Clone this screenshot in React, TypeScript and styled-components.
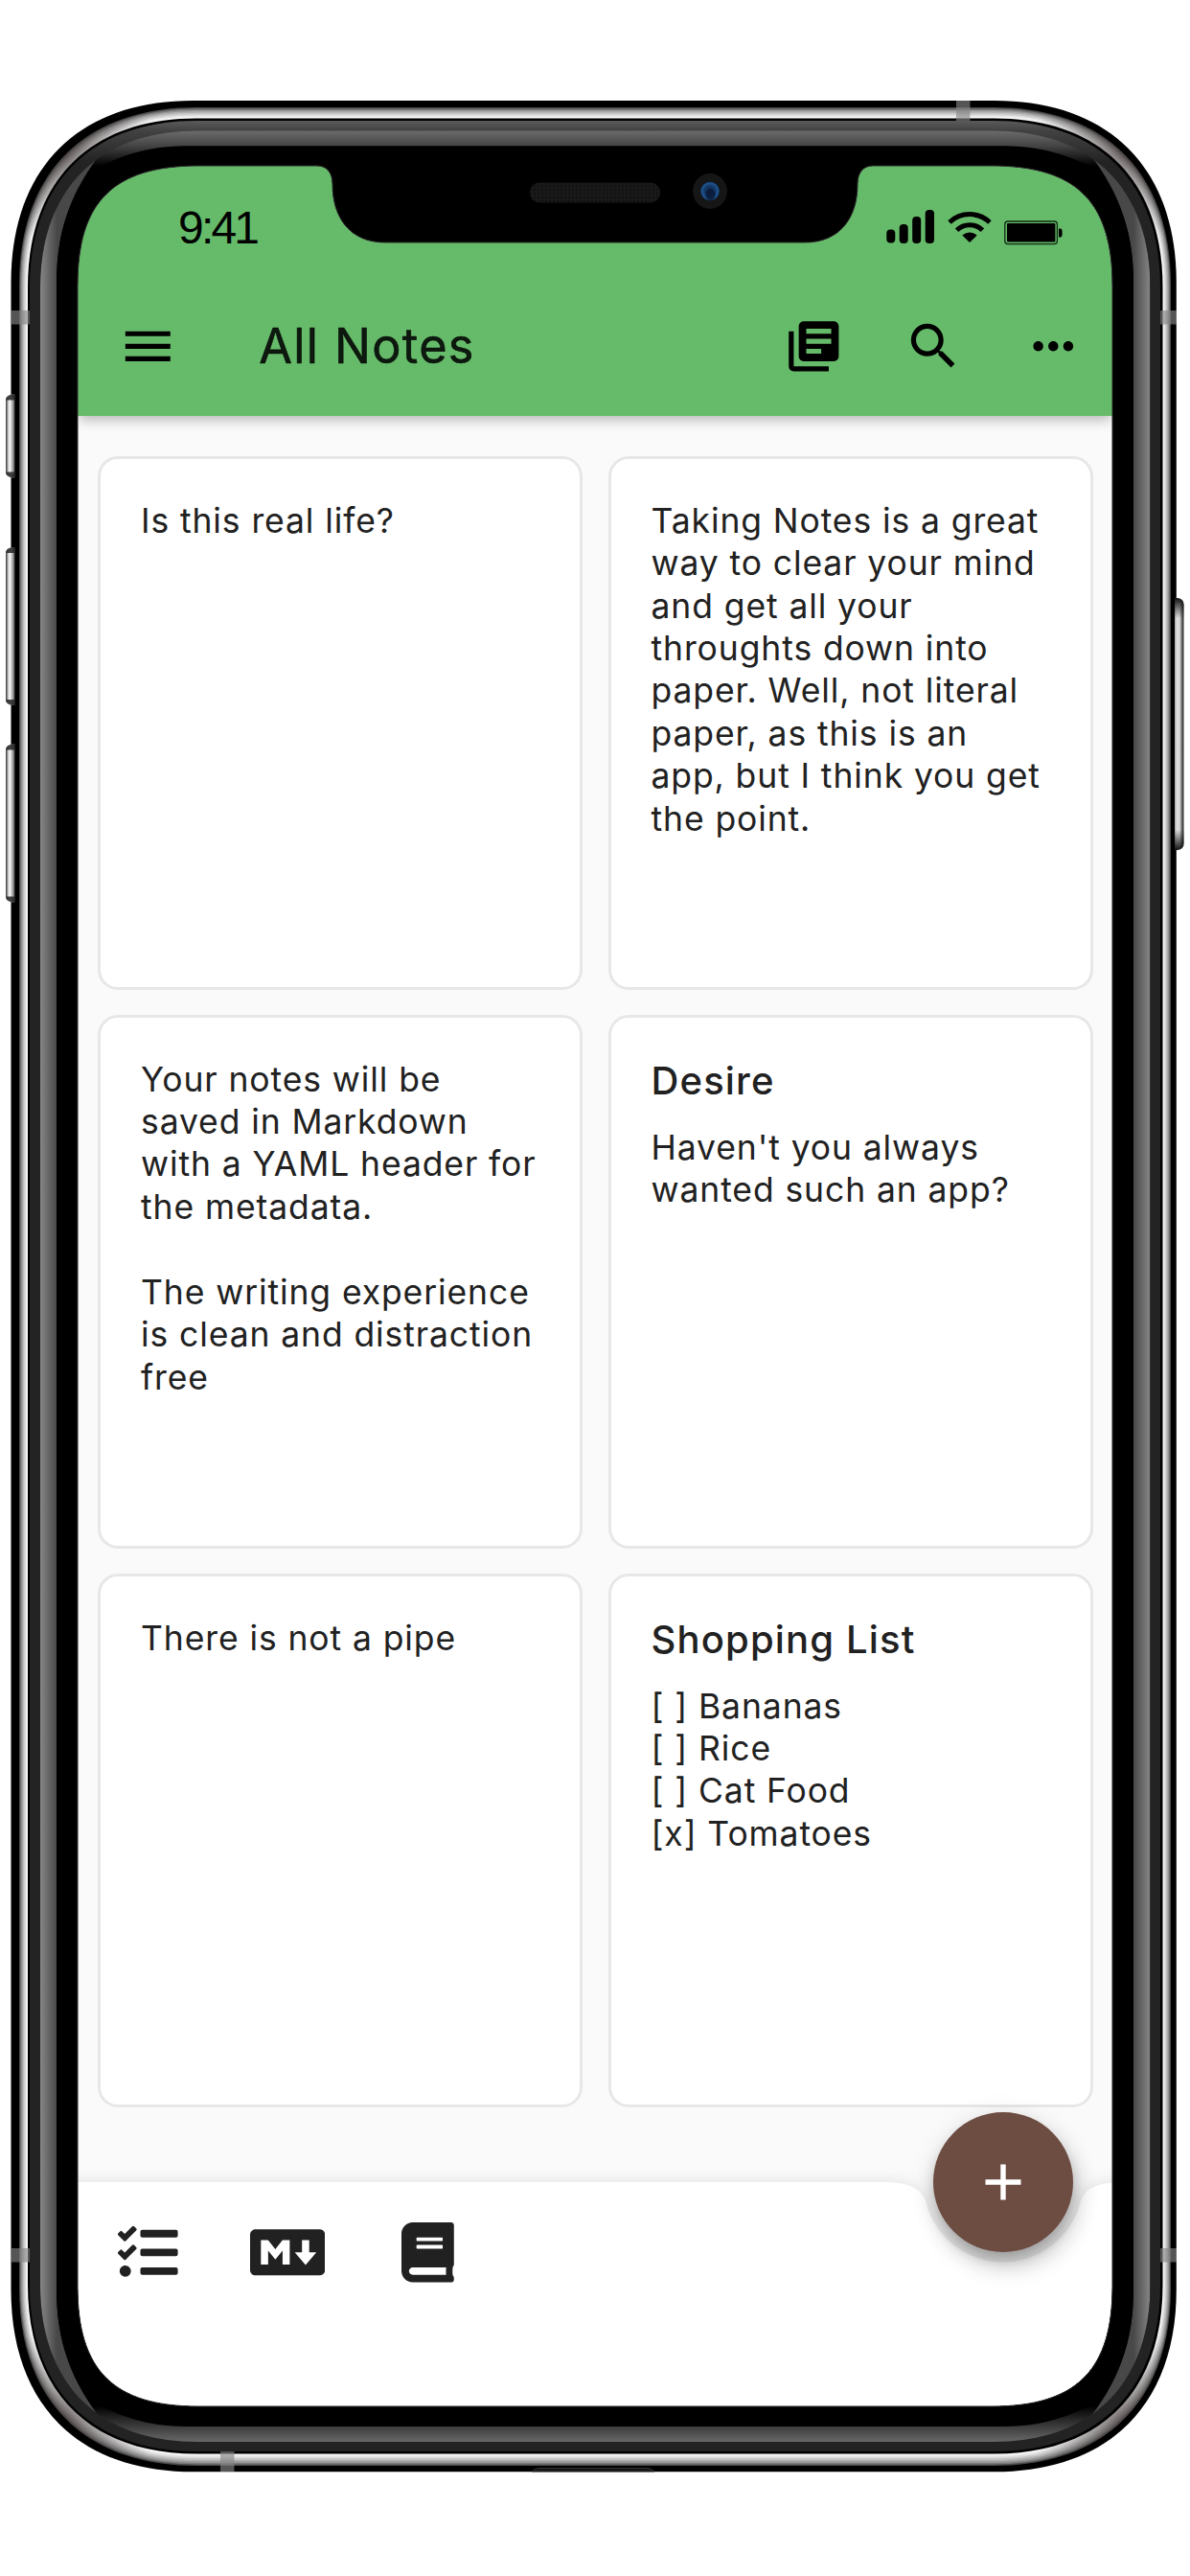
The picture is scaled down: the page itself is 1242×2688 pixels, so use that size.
import React from "react";
import styled, { createGlobalStyle } from "styled-components";
import { MdMenu, MdLibraryBooks, MdSearch, MdMoreHoriz } from "react-icons/md";
import { FaTasks, FaMarkdown, FaBook } from "react-icons/fa";

const GlobalStyle = createGlobalStyle`
  *, *::before, *::after { box-sizing: border-box; }
  body { margin: 0; background: #fff; }
  button { border: 0; background: none; padding: 0; margin: 0; color: inherit; font: inherit; }
  svg { display: block; flex: none; }
`;

const Page = styled.div`
  position: relative;
  width: 1242px;
  height: 2688px;
  padding: 173px 81px 177px;
  overflow: hidden;
  background: #fff;
  font-family: Inter, Roboto, "Liberation Sans", sans-serif;
`;

const Screen = styled.main`
  position: relative;
  display: flex;
  flex-direction: column;
  width: 1080px;
  height: 2338px;
  overflow: hidden;
  background: #fafafa;
  border-radius: 80px;
`;

const Header = styled.header`
  position: relative;
  flex: none;
  height: 261px;
  color: #000;
  background: #66bb6a;
  box-shadow: 0 5px 10px -3px rgba(0, 0, 0, 0.16), 0 8px 12px rgba(0, 0, 0, 0.08), 0 3px 16px rgba(0, 0, 0, 0.06);
`;

const StatusBar = styled.div`
  display: flex;
  justify-content: space-between;
  align-items: flex-start;
  height: 115px;
  padding: 38px 51px 0 105px;
`;

const StatusSymbols = styled.div`
  padding-top: 7px;
`;

const Clock = styled.time`
  font-family: "Liberation Sans", Arial, sans-serif;
  font-size: 48px;
  line-height: 54px;
  letter-spacing: -2.8px;
`;

const Toolbar = styled.div`
  display: flex;
  align-items: center;
  height: 146px;
  padding: 0 30.4px 0 41.7px;
`;

const Title = styled.h1`
  flex: 1;
  margin: 0 0 0 84.9px;
  font-size: 50.4px;
  font-weight: 400;
  line-height: 60px;
  letter-spacing: 1.35px;
  color: rgba(0, 0, 0, 0.87);
  -webkit-text-stroke: 0.6px rgba(0, 0, 0, 0.87);
`;

const Actions = styled.div`
  display: flex;
  gap: 62.6px;
`;

const IconButton = styled.button<{ $glyphWidth?: number }>`
  display: flex;
  font-size: 62.6px;

  svg {
    width: ${(p) => (p.$glyphWidth ? `${p.$glyphWidth}px` : "1em")};
  }
`;

const Grid = styled.section`
  display: grid;
  grid-template-columns: repeat(2, 506px);
  grid-auto-rows: 556.6px;
  justify-content: space-between;
  row-gap: 26.4px;
  padding: 42px 20.5px 0 21px;
`;

const Card = styled.article`
  padding: 42.7px 20px 0 42px;
  border: 3px solid #e7e7e7;
  border-radius: 21px;
  background: #fff;
  color: #212121;
`;

const CardTitle = styled.h2`
  margin: 0 0 25px;
  font-size: 40px;
  font-weight: 500;
  line-height: 46px;
  letter-spacing: 1.15px;
`;

const CardBody = styled.p`
  margin: 0;
  font-size: 35.5px;
  line-height: 44.4px;
  letter-spacing: 0.9px;
  white-space: pre;
`;

const BottomBar = styled.footer`
  position: absolute;
  left: 0;
  right: 0;
  bottom: 0;
  height: 234px;
`;

const BarShape = styled.svg`
  position: absolute;
  left: 0;
  top: 0;
  overflow: visible;
  filter: drop-shadow(0 0 8px rgba(0, 0, 0, 0.1));
`;

const BarActions = styled.nav`
  position: relative;
  display: grid;
  grid-template-columns: 138px 158px 55px;
  padding: 42px 0 0 42px;
  color: #212121;
`;

const Fab = styled.button`
  position: absolute;
  left: 893px;
  bottom: 161px;
  display: flex;
  align-items: center;
  justify-content: center;
  width: 146px;
  height: 146px;
  border-radius: 50%;
  background: #6d4c41;
  box-shadow: 0 8px 13px -2px rgba(0, 0, 0, 0.2), 4px 15px 24px rgba(0, 0, 0, 0.2), 0 3px 30px rgba(0, 0, 0, 0.08);
`;

const Bezel = styled.svg`
  position: absolute;
  left: 0;
  top: 0;
  pointer-events: none;
`;

type Note = { title?: string; body: string };

const notes: Note[] = [
  { body: "Is this real life?" },
  {
    body:
      "Taking Notes is a great\nway to clear your mind\nand get all your\nthroughts down into\npaper. Well, not literal\npaper, as this is an\napp, but I think you get\nthe point.",
  },
  {
    body:
      "Your notes will be\nsaved in Markdown\nwith a YAML header for\nthe metadata.\n\nThe writing experience\nis clean and distraction\nfree",
  },
  { title: "Desire", body: "Haven't you always\nwanted such an app?" },
  { body: "There is not a pipe" },
  { title: "Shopping List", body: "[ ] Bananas\n[ ] Rice\n[ ] Cat Food\n[x] Tomatoes" },
];

/* Rounded rectangle with smooth corners: e is how far the corner reaches, k how square it is. */
function squircle(l: number, t: number, r: number, b: number, e: number, k: number) {
  const c = e * (1 - k);
  return [
    `M${l} ${t + e}C${l} ${t + c} ${l + c} ${t} ${l + e} ${t}`,
    `H${r - e}C${r - c} ${t} ${r} ${t + c} ${r} ${t + e}`,
    `V${b - e}C${r} ${b - c} ${r - c} ${b} ${r - e} ${b}`,
    `H${l + e}C${l + c} ${b} ${l} ${b - c} ${l} ${b - e}Z`,
  ].join("");
}

const bodyPath = squircle(11.5, 105, 1227.8, 2579.3, 190, 0.63);
const steelPath = squircle(20, 112, 1222, 2573, 185, 0.63);
const lipPath = squircle(42, 136.5, 1200.5, 2548, 164, 0.63);

const screenPath = [
  "M81 298C81 211 118 173 207 173",
  "H331C341 173 347 180 347 192C347 228 366 253 402 253",
  "H840C876 253 895 228 895 192C895 180 901 173 911 173",
  "H1035C1124 173 1161 211 1161 298",
  "V2386C1161 2473 1124 2511 1035 2511",
  "H207C118 2511 81 2473 81 2386Z",
].join("");

const steelTones = ["#4c4c4c", "#7a7a7a", "#989898", "#b0b0b0", "#c6c6c6", "#dadada", "#ececec", "#f8f8f8"];

function SteelBand() {
  return (
    <>
      {steelTones.map((tone, i) => {
        const p = i / steelTones.length;
        return (
          <path
            key={tone}
            d={squircle(20 + 9 * p, 112 + 11.5 * p, 1222 - 8.5 * p, 2573 - 12.5 * p, 185 - 9 * p, 0.63)}
            fill={tone}
          />
        );
      })}
    </>
  );
}

const antennas = [
  { x: 11.5, y: 324, w: 19.5, h: 14.5 },
  { x: 1211, y: 324, w: 17, h: 14.5 },
  { x: 11.5, y: 2346, w: 19.5, h: 14.5 },
  { x: 1211, y: 2346, w: 17, h: 14.5 },
  { x: 998, y: 105, w: 14.5, h: 21 },
  { x: 230, y: 2558, w: 14.5, h: 21 },
];

const sideKeys = [
  { y: 411.5, h: 87 },
  { y: 571, h: 165 },
  { y: 776.5, h: 165 },
];

const cornerShades = [
  [68, 160],
  [1172, 160],
  [68, 2525],
  [1172, 2525],
];

function PhoneBezel() {
  return (
    <Bezel width="1242" height="2688" viewBox="0 0 1242 2688" aria-hidden="true">
      <defs>
        <clipPath id="outsideScreen">
          <path clipRule="evenodd" d={`M0 0H1242V2688H0Z${screenPath}`} />
        </clipPath>
        <clipPath id="withinSteel">
          <path d={steelPath} />
        </clipPath>
        <clipPath id="withinLip">
          <path d={lipPath} />
        </clipPath>
        <linearGradient id="ringTone" gradientUnits="userSpaceOnUse" x1="0" y1="126" x2="0" y2="170">
          <stop offset="0" stopColor="#5a5a5a" />
          <stop offset="0.24" stopColor="#424242" />
          <stop offset="1" stopColor="#232323" />
        </linearGradient>
        <linearGradient id="lipTone" gradientUnits="userSpaceOnUse" x1="0" y1="136" x2="0" y2="2548">
          <stop offset="0" stopColor="#6c6c6c" />
          <stop offset="0.0066" stopColor="#454545" />
          <stop offset="0.0155" stopColor="#000" />
          <stop offset="0.9845" stopColor="#000" />
          <stop offset="0.9934" stopColor="#3c3c3c" />
          <stop offset="1" stopColor="#686868" />
        </linearGradient>
        <linearGradient id="leftSheen" gradientUnits="userSpaceOnUse" x1="42" y1="0" x2="100" y2="0">
          <stop offset="0" stopColor="#868686" />
          <stop offset="0.3" stopColor="#484848" />
          <stop offset="1" stopColor="#484848" />
        </linearGradient>
        <linearGradient id="rightSheen" gradientUnits="userSpaceOnUse" x1="1200.5" y1="0" x2="1142" y2="0">
          <stop offset="0" stopColor="#868686" />
          <stop offset="0.3" stopColor="#484848" />
          <stop offset="1" stopColor="#484848" />
        </linearGradient>
        <linearGradient id="leftKey" x1="0" x2="1" y1="0" y2="0">
          <stop offset="0" stopColor="#333" />
          <stop offset="0.28" stopColor="#c8c8c8" />
          <stop offset="0.42" stopColor="#fff" />
          <stop offset="0.75" stopColor="#aaa" />
          <stop offset="1" stopColor="#444" />
        </linearGradient>
        <linearGradient id="rightKey" x1="0" x2="1" y1="0" y2="0">
          <stop offset="0" stopColor="#999" />
          <stop offset="0.2" stopColor="#dcdcdc" />
          <stop offset="0.55" stopColor="#d8d8d8" />
          <stop offset="0.75" stopColor="#777" />
          <stop offset="1" stopColor="#222" />
        </linearGradient>
        <linearGradient id="keyEnds" x1="0" x2="0" y1="0" y2="1">
          <stop offset="0" stopColor="#111" stopOpacity="1" />
          <stop offset="0.08" stopColor="#111" stopOpacity="0" />
          <stop offset="0.92" stopColor="#111" stopOpacity="0" />
          <stop offset="1" stopColor="#111" stopOpacity="1" />
        </linearGradient>
        <radialGradient id="cornerShade">
          <stop offset="0" stopColor="#4a3f3f" stopOpacity="0.65" />
          <stop offset="0.5" stopColor="#4a4343" stopOpacity="0.38" />
          <stop offset="1" stopColor="#4a4343" stopOpacity="0" />
        </radialGradient>
        <radialGradient id="lens" cx="0.5" cy="0.5" r="0.5">
          <stop offset="0" stopColor="#10233f" />
          <stop offset="0.55" stopColor="#143a69" />
          <stop offset="0.85" stopColor="#205690" />
          <stop offset="1" stopColor="#0a1424" />
        </radialGradient>
        <pattern id="grille" width="4" height="4" patternUnits="userSpaceOnUse">
          <rect width="4" height="4" fill="#191919" />
          <circle cx="2" cy="2" r="1.2" fill="#101010" />
        </pattern>
      </defs>

      <g clipPath="url(#outsideScreen)">
        <path d={bodyPath} fill="#000" />
        <SteelBand />
        <g clipPath="url(#withinSteel)">
          {cornerShades.map(([x, y]) => (
            <circle key={`${x}-${y}`} cx={x} cy={y} r="95" fill="url(#cornerShade)" />
          ))}
        </g>
        <path d={squircle(29, 123.5, 1213.5, 2560.5, 176, 0.63)} fill="#000" />
        <path d={squircle(31, 126, 1211, 2558, 174, 0.63)} fill="url(#ringTone)" />
        <path d={lipPath} fill="url(#lipTone)" />
        <g clipPath="url(#withinLip)">
          <path d="M42 300V240L70 170L110 154C74 198 59 240 59 296V2388C59 2444 74 2486 110 2530L70 2514L42 2444Z" fill="url(#leftSheen)" />
          <path d="M1200.5 300V240L1172 170L1132 154C1168 198 1183 240 1183 296V2388C1183 2444 1168 2486 1132 2530L1172 2514L1200.5 2444Z" fill="url(#rightSheen)" />
        </g>
        <path
          d="M59 296C59 240 74 198 108 172C140 157 164 152.3 200 152.3H1042C1078 152.3 1102 157 1134 172C1168 198 1183 240 1183 296V2388C1183 2444 1168 2486 1134 2512C1102 2527 1078 2532 1042 2532H200C164 2532 140 2527 108 2512C74 2486 59 2444 59 2388Z"
          fill="#000"
        />
      </g>
      <path d={screenPath} fill="none" stroke="#2c2c2c" strokeWidth="1" />

      <rect x="553" y="190.5" width="136" height="21" rx="10" fill="url(#grille)" />
      <ellipse cx="741" cy="199.5" rx="18" ry="18.5" fill="#161616" />
      <circle cx="741" cy="199.5" r="10.2" fill="url(#lens)" />
      <ellipse cx="741.5" cy="203" rx="5" ry="6" fill="#0b1836" opacity="0.8" />

      {antennas.map((a) => (
        <rect key={`${a.x}-${a.y}`} x={a.x} y={a.y} width={a.w} height={a.h} fill="#858587" opacity="0.64" />
      ))}
      {sideKeys.map((k) => (
        <g key={k.y}>
          <path
            d={`M15.5 ${k.y}H13Q6 ${k.y + 1} 6 ${k.y + 7}V${k.y + k.h - 7}Q6 ${k.y + k.h - 1} 13 ${k.y + k.h}H15.5Z`}
            fill="url(#leftKey)"
          />
          <path d={`M15.5 ${k.y}H13Q6 ${k.y + 1} 6 ${k.y + 6}H15.5Z`} fill="#222" opacity="0.85" />
          <path d={`M15.5 ${k.y + k.h}H13Q6 ${k.y + k.h - 1} 6 ${k.y + k.h - 6}H15.5Z`} fill="#222" opacity="0.85" />
        </g>
      ))}
      <path d="M1226 624H1229Q1235.5 625 1235.5 631V880Q1235.5 886 1229 887H1226Z" fill="url(#rightKey)" />
      <path d="M1226 624H1229Q1235.5 625 1235.5 631V880Q1235.5 886 1229 887H1226Z" fill="url(#keyEnds)" />
      <path d="M555 2579Q558 2575.5 563 2575.5H675Q680 2575.5 683 2579Z" fill="#141414" stroke="#333" strokeWidth="1" />
    </Bezel>
  );
}

function StatusIcons() {
  return (
    <svg width="186" height="40" viewBox="924 218 186 40" aria-hidden="true">
      <rect x="925.3" y="239.5" width="9" height="14" rx="4" />
      <rect x="938.7" y="234" width="9" height="20" rx="4" />
      <rect x="952.2" y="226" width="9" height="28" rx="4" />
      <rect x="965.7" y="219" width="9.3" height="35" rx="4" />
      <g fill="none" stroke="#000" strokeWidth="5">
        <path d="M991 232A30.5 30.5 0 0 1 1033 232" />
        <path d="M998.6 240.3A19 19 0 0 1 1025.4 240.3" />
      </g>
      <path d="M1004.3 245.6Q1012 239.2 1019.7 245.6L1012 253Z" />
      <rect x="1048.8" y="231" width="54.6" height="23.6" rx="3" fill="none" stroke="#0f2a12" strokeWidth="1.3" />
      <rect x="1051" y="233" width="50.4" height="19.6" rx="1" />
      <path d="M1105 238.5H1107Q1108.6 239 1108.6 241V245Q1108.6 247 1107 247.5H1105Z" />
    </svg>
  );
}

export default function App() {
  return (
    <Page>
      <GlobalStyle />
      <Screen>
        <Header>
          <StatusBar>
            <Clock>9:41</Clock>
            <StatusSymbols>
              <StatusIcons />
            </StatusSymbols>
          </StatusBar>
          <Toolbar>
            <IconButton aria-label="Menu">
              <MdMenu />
            </IconButton>
            <Title>All Notes</Title>
            <Actions>
              <IconButton aria-label="View">
                <MdLibraryBooks />
              </IconButton>
              <IconButton aria-label="Search">
                <MdSearch />
              </IconButton>
              <IconButton aria-label="More">
                <MdMoreHoriz />
              </IconButton>
            </Actions>
          </Toolbar>
        </Header>
        <Grid>
          {notes.map((note) => (
            <Card key={note.body}>
              {note.title && <CardTitle>{note.title}</CardTitle>}
              <CardBody>{note.body}</CardBody>
            </Card>
          ))}
        </Grid>
        <BottomBar>
          <BarShape width="1080" height="234" viewBox="0 0 1080 234" aria-hidden="true">
            <path
              d="M-20 0H840.9Q880 0 885.1 20.3A83.4 83.4 0 0 0 1046.9 20.3Q1052 0 1091.1 0V260H-20Z"
              fill="#fff"
            />
          </BarShape>
          <BarActions>
            <IconButton aria-label="Checklist">
              <FaTasks />
            </IconButton>
            <IconButton aria-label="Markdown note" $glyphWidth={78.3}>
              <FaMarkdown />
            </IconButton>
            <IconButton aria-label="Journal" $glyphWidth={54.8}>
              <FaBook />
            </IconButton>
          </BarActions>
        </BottomBar>
        <Fab aria-label="New note">
          <svg width="38" height="38" viewBox="0 0 38 38">
            <path d="M19 0.5V37.5M0.5 19H37.5" stroke="#fff" strokeWidth="5.4" />
          </svg>
        </Fab>
      </Screen>
      <PhoneBezel />
    </Page>
  );
}
